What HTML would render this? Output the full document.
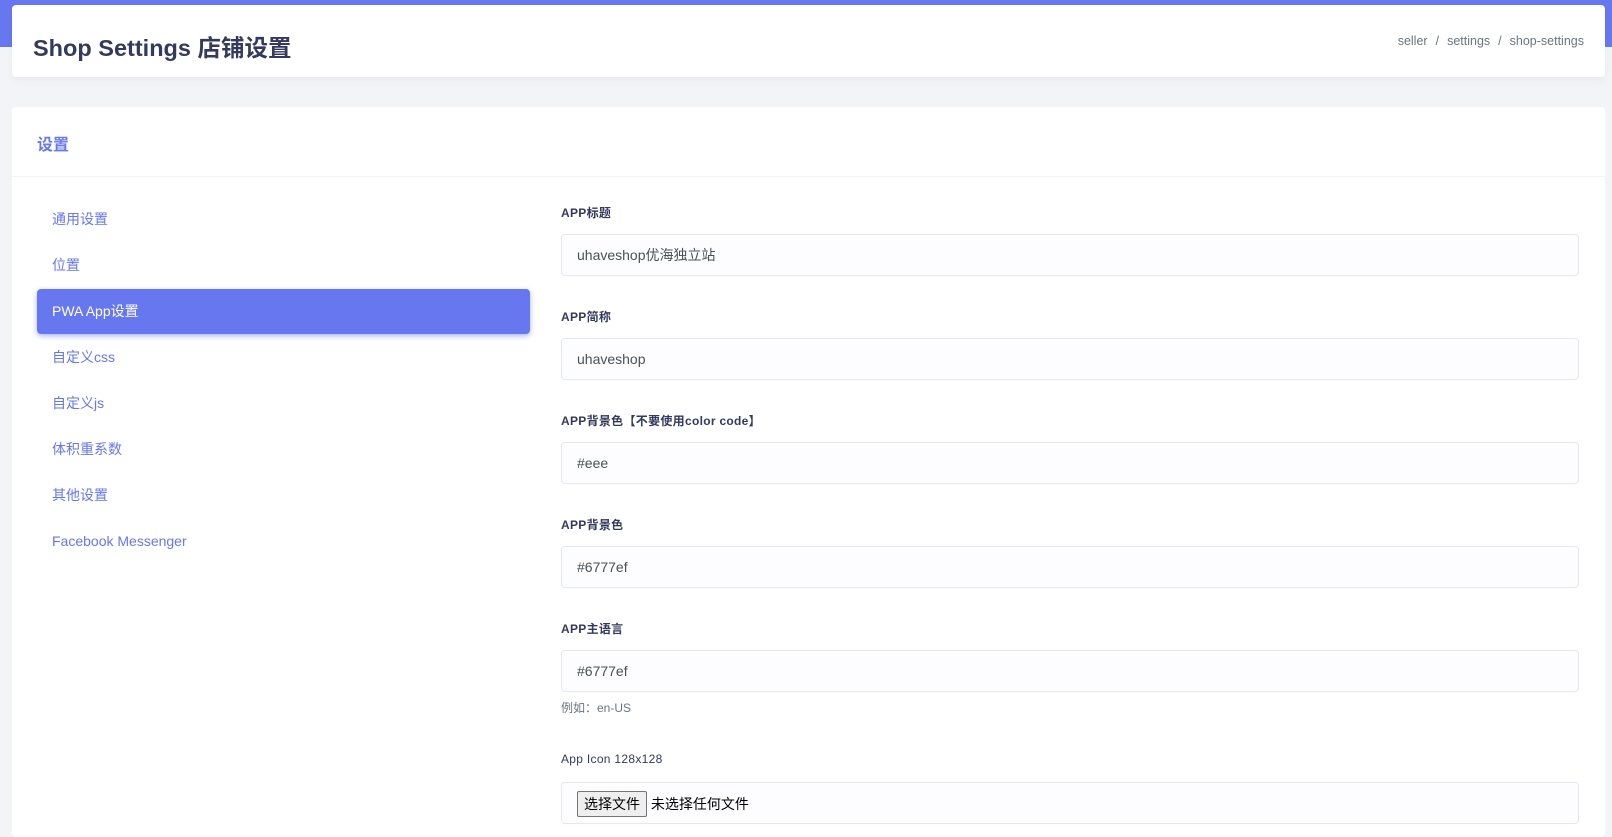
<!DOCTYPE html>
<html><head><meta charset="utf-8"><style>
*{box-sizing:border-box;margin:0;padding:0}
body{width:1612px;height:820px;overflow:hidden;background:#f3f4f7;font-family:"Liberation Sans","Noto Sans CJK SC",sans-serif;position:relative}
.bar{position:absolute;left:0;top:0;width:1612px;height:47px;background:#6777ef}
.head{position:absolute;left:12px;top:5px;width:1593px;height:72px;background:#fff;border-radius:4px;box-shadow:0 4px 8px rgba(0,0,0,.04)}
.head h1{position:absolute;left:21px;top:24px;font-size:23.5px;font-weight:bold;color:#34395e}
.bc{position:absolute;right:21px;top:29px;font-size:12.5px;color:#6c757d}
.bc span{margin:0 8px;color:#6c757d}
.card{position:absolute;left:12px;top:107px;width:1593px;height:730px;background:#fff;border-radius:4px}
.card h4{position:absolute;left:25px;top:24px;font-size:16px;font-weight:600;color:#6777ef}
.div{position:absolute;left:0;top:69px;width:100%;height:1px;background:#f4f4f6}
.nav a{position:absolute;left:25px;width:493px;height:45px;padding:0 15px;line-height:45px;font-size:14px;color:#6777ef;text-decoration:none;border-radius:4px}
.nav a.act{background:#6777ef;color:#fff;box-shadow:0 2px 6px #acb5f6}
.lbl{position:absolute;left:549px;font-size:12px;font-weight:bold;color:#34395e;letter-spacing:.3px}
.inp{position:absolute;left:549px;width:1018px;height:42px;border:1px solid #e4e6fc;background:#fdfdff;border-radius:4px;padding-left:15px;line-height:40px;font-size:14px;color:#495057}
.help{position:absolute;left:549px;font-size:12px;color:#6c757d}
.btn{display:inline-block;border:1px solid #767676;background:#efefef;border-radius:2px;padding:0 6px;line-height:24px;font-size:14px;color:#000;margin-top:8px}
</style></head><body>
<div class="bar"></div>
<div class="head"><h1>Shop Settings 店铺设置</h1><div class="bc">seller<span>/</span>settings<span>/</span>shop-settings</div></div>
<div class="card">
<h4>设置</h4><div class="div"></div>
<div class="nav">
<a style="top:90px">通用设置</a>
<a style="top:136px">位置</a>
<a class="act" style="top:182px">PWA App设置</a>
<a style="top:228px">自定义css</a>
<a style="top:274px">自定义js</a>
<a style="top:320px">体积重系数</a>
<a style="top:366px">其他设置</a>
<a style="top:412px">Facebook Messenger</a>
</div>
<div class="lbl" style="top:97px">APP标题</div>
<div class="inp" style="top:127px">uhaveshop优海独立站</div>
<div class="lbl" style="top:201px">APP简称</div>
<div class="inp" style="top:231px">uhaveshop</div>
<div class="lbl" style="top:305px">APP背景色【不要使用color code】</div>
<div class="inp" style="top:335px">#eee</div>
<div class="lbl" style="top:409px">APP背景色</div>
<div class="inp" style="top:439px">#6777ef</div>
<div class="lbl" style="top:513px">APP主语言</div>
<div class="inp" style="top:543px">#6777ef</div>
<div class="help" style="top:592px">例如：en-US</div>
<div class="lbl" style="top:645px;font-weight:normal">App Icon 128x128</div>
<div class="inp" style="top:675px;line-height:normal"><span class="btn">选择文件</span> <span style="font-size:14px;color:#000">未选择任何文件</span></div>
</div>
</body></html>
